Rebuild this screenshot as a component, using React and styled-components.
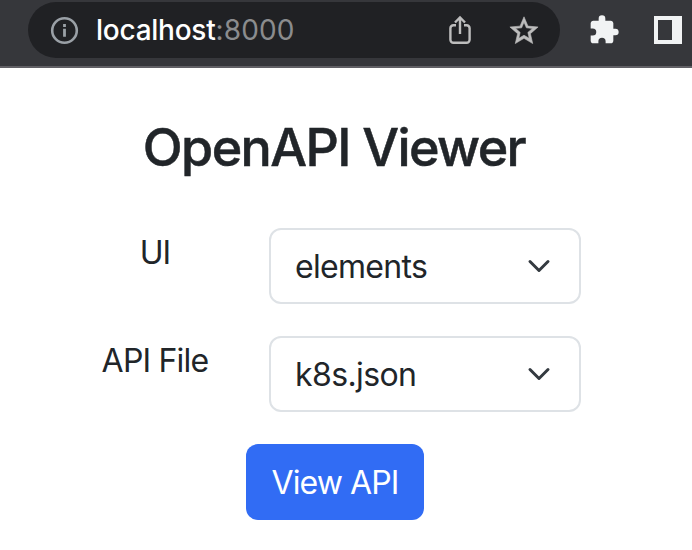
import React from "react";
import styled, { createGlobalStyle } from "styled-components";

const GlobalStyle = createGlobalStyle`
  * { box-sizing: border-box; }
  body {
    margin: 0;
    background: #fff;
    color: #212529;
    font-family: Inter, "Liberation Sans", sans-serif;
    font-size: 32px;
    line-height: 48px;
    overflow: hidden;
  }
`;

const Window = styled.div`
  width: 692px;
  height: 550px;
  background: #fff;
`;

const Toolbar = styled.header`
  display: flex;
  align-items: flex-start;
  height: 68px;
  padding: 2px 10px 0 28px;
  background: #36373b;
  border-bottom: 2px solid #616065;
`;

const AddressBar = styled.div`
  display: flex;
  align-items: center;
  width: 532px;
  height: 56px;
  margin-right: 28px;
  padding: 0 20px 0 21px;
  border-radius: 28px;
  background: #202124;
`;

const Url = styled.div`
  flex: 1;
  margin-left: 17px;
  color: #fff;
  font-size: 28px;
  font-weight: 500;
  line-height: 56px;
  letter-spacing: -0.25px;
  white-space: nowrap;
`;

const Port = styled.span`
  color: #8b8c8e;
  font-weight: 400;
  letter-spacing: 0.15px;
`;

const Icon = styled.svg`
  display: block;
  flex: none;
  width: ${(p) => p.$size}px;
  height: ${(p) => p.$size}px;
  margin-left: ${(p) => p.$gap || 0}px;
`;

const ToolbarAction = styled.div`
  display: flex;
  align-items: center;
  height: 56px;
`;

const Page = styled.main`
  display: flex;
  flex-direction: column;
  align-items: center;
  width: 670px;
  padding-top: 48px;
`;

const Title = styled.h1`
  margin: 0 2px 48px 0;
  font-size: 52px;
  font-weight: 500;
  line-height: 64px;
  letter-spacing: -1.6px;
  -webkit-text-stroke: 0.5px #212529;
  white-space: nowrap;
`;

const Form = styled.form`
  display: flex;
  flex-direction: column;
  align-items: center;
  gap: 32px;
`;

const Field = styled.div`
  display: grid;
  grid-template-columns: 180px 312px;
  column-gap: 24px;
  width: 516px;
  margin-right: 24px;
`;

const Label = styled.label`
  padding-top: 1px;
  text-align: center;
  letter-spacing: ${(p) => p.$tracking}px;
`;

const Select = styled.button`
  display: flex;
  align-items: center;
  justify-content: space-between;
  width: 312px;
  height: 76px;
  padding: 0 28px 0 24px;
  border: 2px solid #dee2e6;
  border-radius: 12px;
  background: #fff;
  color: inherit;
  font: inherit;
  letter-spacing: ${(p) => p.$tracking}px;
`;

const Value = styled.span`
  padding-top: 2px;
`;

const Submit = styled.button`
  width: 178px;
  height: 76px;
  padding: 2px 0 0;
  border: 0;
  border-radius: 12px;
  background: #316cf4;
  color: #fff;
  font: inherit;
  letter-spacing: -0.9px;
`;

const Chevron = () => (
  <Icon $size={24} viewBox="0 0 16 16" fill="none" stroke="#343a40" strokeWidth="2" strokeLinecap="round" strokeLinejoin="round">
    <path d="m2 5 6 6 6-6" />
  </Icon>
);

const Dropdown = ({ label, value, labelTracking, tracking }) => (
  <Field>
    <Label $tracking={labelTracking}>{label}</Label>
    <Select type="button" $tracking={tracking}>
      <Value>{value}</Value>
      <Chevron />
    </Select>
  </Field>
);

export default function App() {
  return (
    <Window>
      <GlobalStyle />
      <Toolbar>
        <AddressBar>
          <Icon $size={30} viewBox="0 0 30 30" fill="none" stroke="#9aa0a6" strokeWidth="2.6">
            <circle cx="15.5" cy="15.5" r="12.3" />
            <path d="M15.5 13.8v8M15.5 9v3" strokeWidth="2.8" />
          </Icon>
          <Url>
            localhost<Port>:8000</Port>
          </Url>
          <Icon $size={32} viewBox="0 0 32 32" fill="none" stroke="#bdbdbd" strokeWidth="2.4">
            <path d="M12 11.2H9.4a3 3 0 0 0-3 3v11.6a3 3 0 0 0 3 3h13.2a3 3 0 0 0 3-3V14.2a3 3 0 0 0-3-3H20" />
            <path d="M16 20V4M11 8.5l5-5 5 5" />
          </Icon>
          <Icon $size={32} $gap={32} viewBox="0.35 0 24 24" fill="#bdbdbd" stroke="#bdbdbd" strokeWidth="0.45">
            <path d="m22.900 9.740-7.600-.65L12.350 2.100l-2.970 7-7.600.64 5.770 5-1.730 7.430 6.530-3.940 6.530 3.940-1.720-7.430ZM12.350 15.900l-3.930 2.370 1.040-4.480-3.470-3.010 4.580-.4 1.780-4.210 1.790 4.220 4.580.4-3.470 3.010 1.040 4.480Z" />
          </Icon>
        </AddressBar>
        <ToolbarAction>
          <Icon $size={32} viewBox="0 0 24 24" fill="#f1f3f4">
            <path d="M20.500 11H19V7c0-1.100-.9-2-2-2h-4V3.500a2.500 2.500 0 0 0-5 0V5H4c-1.100 0-2 .9-2 2v3.800h1.500a2.700 2.700 0 0 1 0 5.400H2V20c0 1.100.9 2 2 2h3.800v-1.500a2.700 2.700 0 0 1 5.400 0V22H17c1.100 0 2-.9 2-2v-4h1.500a2.500 2.500 0 0 0 0-5Z" />
          </Icon>
          <Icon $size={28} $gap={34} viewBox="0 0 28 28">
            <path fill="#f1f3f4" fillRule="evenodd" d="M0 0h28v28H0ZM4 4v20h14V4Z" />
          </Icon>
        </ToolbarAction>
      </Toolbar>
      <Page>
        <Title>OpenAPI Viewer</Title>
        <Form>
          <Dropdown label="UI" value="elements" labelTracking={-1} tracking={-0.7} />
          <Dropdown label="API File" value="k8s.json" labelTracking={-0.8} tracking={-0.6} />
          <Submit type="button">View API</Submit>
        </Form>
      </Page>
    </Window>
  );
}
